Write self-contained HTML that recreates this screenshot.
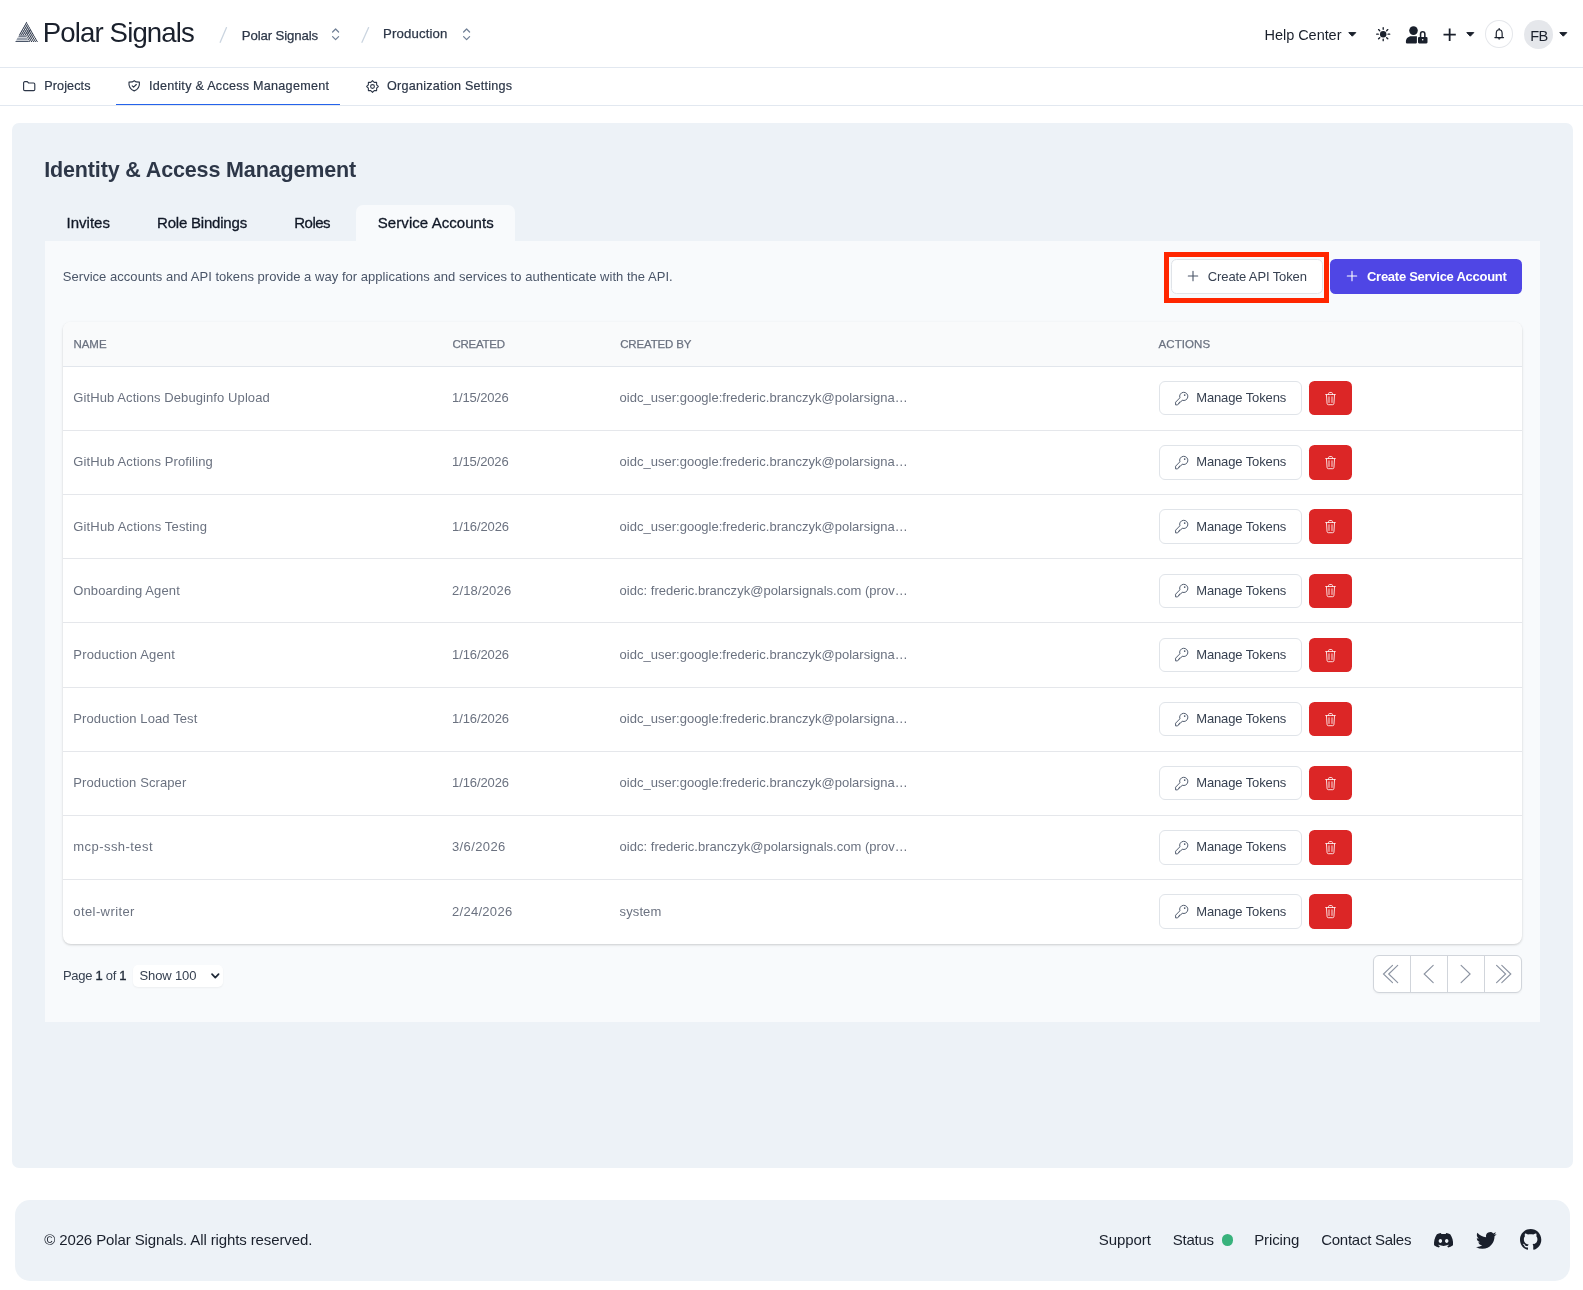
<!DOCTYPE html>
<html lang="en"><head><meta charset="utf-8"><title>Identity &amp; Access Management - Polar Signals</title>
<style>
*{box-sizing:border-box}
html,body{margin:0;padding:0;background:#fff}
body{width:1583px;height:1290px;position:relative;overflow:hidden;font-family:"Liberation Sans",sans-serif;}
#w{position:absolute;left:0;top:0;width:1583px;height:1290px;will-change:transform}
.t{position:absolute;white-space:pre;line-height:1;display:block}
.b{position:absolute}
svg{position:absolute;overflow:visible}
</style></head>
<body>
<div id="w">
<div class="b" style="left:0px;top:67px;width:1583px;height:1px;background:#e2e8f0"></div>
<div class="b" style="left:0px;top:105px;width:1583px;height:1px;background:#e2e8f0"></div>
<svg style="left:15px;top:22px" width="23.2" height="20.2" viewBox="15 22 23.2 20.2">
<defs><clipPath id="tri"><polygon points="26.3,21.6 38.3,42.1 14.9,42.1"/></clipPath>
<clipPath id="lf"><polygon points="26.3,21 31.6,30.0 25.9,35.3 18.0,35.3"/></clipPath>
<clipPath id="rf"><polygon points="31.4,29.2 38.6,42.1 29.6,42.1 25.9,35.3 28,31"/></clipPath></defs>
<g clip-path="url(#tri)">
<g clip-path="url(#lf)"><path d="M27.91,20 L14.55,44 M29.81,20 L16.45,44 M31.71,20 L18.35,44 M33.61,20 L20.25,44 M35.51,20 L22.15,44 M37.41,20 L24.05,44 M39.31,20 L25.95,44 M41.21,20 L27.85,44 " stroke="#2d3748" stroke-width="1.0"/><path d="M24.63,20 L38.67,44 M22.73,20 L36.77,44 M20.83,20 L34.87,44 M18.93,20 L32.97,44 M17.03,20 L31.07,44 M15.13,20 L29.17,44 M13.23,20 L27.27,44 M11.33,20 L25.37,44 " stroke="#4a5568" stroke-width="0.55"/></g>
<g clip-path="url(#rf)"><path d="M24.63,20 L38.67,44 M22.73,20 L36.77,44 M20.83,20 L34.87,44 M18.93,20 L32.97,44 M17.03,20 L31.07,44 M15.13,20 L29.17,44 M13.23,20 L27.27,44 M11.33,20 L25.37,44 " stroke="#2d3748" stroke-width="1.0"/><path d="M27.91,20 L14.55,44 M29.81,20 L16.45,44 M31.71,20 L18.35,44 M33.61,20 L20.25,44 M35.51,20 L22.15,44 M37.41,20 L24.05,44 M39.31,20 L25.95,44 M41.21,20 L27.85,44 " stroke="#4a5568" stroke-width="0.35"/></g>
<polygon points="18.9,35.6 25.6,35.6 26.2,36.7 18.3,36.7" fill="#4a5568"/>
<polygon points="17.6,37.5 26.7,37.5 28.3,40.5 16,40.5" fill="#9aa1ad"/>
<polygon points="15.7,41.0 28.6,41.0 29.2,42.1 15.1,42.1" fill="#4a5568"/>
</g></svg>
<span class="t" style="left:42.80px;top:17px;font-size:27.6px;line-height:31px;color:#1a202c;letter-spacing:-0.88px;">Polar Signals</span>
<svg style="left:0;top:0" width="1583" height="70"><line x1="220.2" y1="42.3" x2="226.5" y2="27.6" stroke="#cbd5e0" stroke-width="1.3" stroke-linecap="round"/></svg>
<span class="t" style="left:241.80px;top:28px;font-size:13.2px;line-height:15px;color:#2d3748;letter-spacing:-0.12px;-webkit-text-stroke:0.25px #2d3748;">Polar Signals</span>
<svg style="left:332.4px;top:28px" width="7.2" height="12.4" viewBox="0.4 0 7.2 12.4"><path d="M1.0,4.0 L4,1 L7.0,4.0 M1.0,8.6 L4,11.6 L7.0,8.6" fill="none" stroke="#718096" stroke-width="1.25" stroke-linecap="round" stroke-linejoin="round"/></svg>
<svg style="left:0;top:0" width="1583" height="70"><line x1="362" y1="42.3" x2="368.6" y2="27.6" stroke="#cbd5e0" stroke-width="1.3" stroke-linecap="round"/></svg>
<span class="t" style="left:383.00px;top:26px;font-size:13.2px;line-height:15px;color:#2d3748;letter-spacing:0.15px;-webkit-text-stroke:0.25px #2d3748;">Production</span>
<svg style="left:462.79999999999995px;top:28px" width="7.2" height="12.4" viewBox="0.4 0 7.2 12.4"><path d="M1.0,4.0 L4,1 L7.0,4.0 M1.0,8.6 L4,11.6 L7.0,8.6" fill="none" stroke="#718096" stroke-width="1.25" stroke-linecap="round" stroke-linejoin="round"/></svg>
<span class="t" style="left:1264.60px;top:27px;font-size:14.5px;line-height:16px;color:#1a202c;letter-spacing:-0.05px;">Help Center</span>
<svg style="left:1348.1px;top:32.2px" width="8.6" height="4.9" viewBox="0 0 8.6 4.9"><path d="M0.8,0.6 L7.8,0.6 L4.3,4.2 Z" fill="#1a202c" stroke="#1a202c" stroke-width="1.0" stroke-linejoin="round"/></svg>
<svg style="left:1375.8px;top:26.75px" width="14.4" height="14.4" viewBox="-7.2 -7.2 14.4 14.4"><circle r="3.25" fill="#1a202c"/><path d="M4.90,0.00 L6.50,0.00 M3.46,3.46 L4.60,4.60 M0.00,4.90 L0.00,6.50 M-3.46,3.46 L-4.60,4.60 M-4.90,0.00 L-6.50,0.00 M-3.46,-3.46 L-4.60,-4.60 M-0.00,-4.90 L-0.00,-6.50 M3.46,-3.46 L4.60,-4.60 " stroke="#1a202c" stroke-width="1.35" stroke-linecap="round"/></svg>
<svg style="left:1405px;top:26px" width="24" height="18" viewBox="1405 26 24 18">
<circle cx="1413.5" cy="30.6" r="4.3" fill="#1a202c"/>
<path d="M1405.9,43.4 V41.7 C1405.9,38.5 1408.2,36.2 1411.3,36.2 H1415.8 C1416.2,36.2 1416.6,36.25 1416.9,36.35 V42.6 Q1416.9,43.4 1416.1,43.4 H1406.7 Q1405.9,43.4 1405.9,42.6 Z" fill="#1a202c"/>
<path d="M1420.55,37.2 V33.9 a2.15,2.15 0 0 1 4.3,0 V37.2" fill="none" stroke="#1a202c" stroke-width="1.55"/>
<rect x="1418" y="36.9" width="9.5" height="6.5" rx="1.1" fill="#1a202c"/>
<circle cx="1422.7" cy="39.7" r="0.8" fill="#fff"/>
</svg>
<svg style="left:1443px;top:28px" width="14" height="14" viewBox="1443 28 14 14"><path d="M1449.65,28.4 V41.0 M1443.5,34.7 H1455.8" stroke="#1a202c" stroke-width="1.8" stroke-linecap="butt"/></svg>
<svg style="left:1465.8px;top:32.2px" width="8.6" height="4.9" viewBox="0 0 8.6 4.9"><path d="M0.8,0.6 L7.8,0.6 L4.3,4.2 Z" fill="#1a202c" stroke="#1a202c" stroke-width="1.0" stroke-linejoin="round"/></svg>
<div class="b" style="left:1485px;top:20.2px;width:27.9px;height:28.3px;border-radius:50%;background:#fff;border:1px solid #e5e7eb"></div>
<svg style="left:1494px;top:28px" width="10.4" height="12.4" viewBox="1494 28 10.4 12.4">
<path d="M1496.25,37.55 V33.6 C1496.25,31.3 1497.5,29.75 1499.2,29.75 C1500.9,29.75 1502.15,31.3 1502.15,33.6 V37.55" fill="none" stroke="#1a202c" stroke-width="1.2"/>
<path d="M1494.9,37.6 H1503.5" stroke="#1a202c" stroke-width="1.25" stroke-linecap="round"/>
<path d="M1499.2,28.6 V29.6" stroke="#1a202c" stroke-width="1.2" stroke-linecap="round"/>
<path d="M1498.1,38.6 C1498.3,39.6 1500.1,39.6 1500.3,38.6 Z" fill="#1a202c" stroke="#1a202c" stroke-width="0.5"/>
</svg>
<div class="b" style="left:1524.1px;top:20.1px;width:28.8px;height:28.5px;border-radius:50%;background:#e5e7eb"></div>
<span class="t" style="left:1530.20px;top:28px;font-size:14.6px;line-height:16px;color:#1a202c;letter-spacing:-0.5px;">FB</span>
<svg style="left:1558.9px;top:32.15px" width="8.6" height="4.9" viewBox="0 0 8.6 4.9"><path d="M0.8,0.6 L7.8,0.6 L4.3,4.2 Z" fill="#1a202c" stroke="#1a202c" stroke-width="1.0" stroke-linejoin="round"/></svg>
<svg style="left:22.9px;top:80.6px" width="12.4" height="10.4" viewBox="0 0 12.4 10.4">
<path d="M0.6,1.9 C0.6,1.2 1.1,0.7 1.8,0.7 L4.3,0.7 L5.6,2.0 L10.6,2.0 C11.3,2.0 11.8,2.5 11.8,3.2 L11.8,8.5 C11.8,9.2 11.3,9.7 10.6,9.7 L1.8,9.7 C1.1,9.7 0.6,9.2 0.6,8.5 Z" fill="none" stroke="#2d3748" stroke-width="1.15" stroke-linejoin="round"/></svg>
<span class="t" style="left:44.30px;top:79px;font-size:12.6px;line-height:14px;color:#2d3748;letter-spacing:0.1px;-webkit-text-stroke:0.2px #2d3748;">Projects</span>
<svg style="left:127.8px;top:80.2px" width="12.4" height="11.6" viewBox="0 0 12.4 11.6">
<path d="M6.2,0.7 L8.2,1.9 L11.4,2.1 C11.8,5.6 10.6,9.2 6.2,10.9 C1.8,9.2 0.6,5.6 1.0,2.1 L4.2,1.9 Z" fill="none" stroke="#2d3748" stroke-width="1.15" stroke-linejoin="round"/>
<path d="M4.2,5.8 L5.6,7.2 L8.3,4.5" fill="none" stroke="#2d3748" stroke-width="1.15" stroke-linecap="round" stroke-linejoin="round"/></svg>
<span class="t" style="left:149.00px;top:79px;font-size:12.6px;line-height:14px;color:#2d3748;letter-spacing:0.26px;-webkit-text-stroke:0.2px #2d3748;">Identity &amp; Access Management</span>
<div class="b" style="left:116.3px;top:103.6px;width:223.4px;height:1.6px;background:#2563eb"></div>
<svg style="left:365.5px;top:79.6px" width="13" height="13" viewBox="-6.5 -6.5 13 13"><polygon points="0.00,-5.80 1.72,-4.16 4.10,-4.10 4.16,-1.72 5.80,0.00 4.16,1.72 4.10,4.10 1.72,4.16 0.00,5.80 -1.72,4.16 -4.10,4.10 -4.16,1.72 -5.80,0.00 -4.16,-1.72 -4.10,-4.10 -1.72,-4.16" fill="none" stroke="#2d3748" stroke-width="1.1" stroke-linejoin="round"/><circle r="1.9" fill="none" stroke="#2d3748" stroke-width="1.1"/></svg>
<span class="t" style="left:387.10px;top:79px;font-size:12.6px;line-height:14px;color:#2d3748;letter-spacing:0.23px;-webkit-text-stroke:0.2px #2d3748;">Organization Settings</span>
<div class="b" style="left:12px;top:123px;width:1561px;height:1044.6px;background:#edf2f7;border-radius:7px"></div>
<span class="t" style="left:44.20px;top:158px;font-size:21.5px;line-height:24px;color:#2d3748;font-weight:700;letter-spacing:-0.14px;">Identity &amp; Access Management</span>
<span class="t" style="left:66.60px;top:214px;font-size:15px;line-height:17px;color:#111827;-webkit-text-stroke:0.3px #111827;">Invites</span>
<span class="t" style="left:157.00px;top:214px;font-size:15px;line-height:17px;color:#111827;letter-spacing:-0.2px;-webkit-text-stroke:0.3px #111827;">Role Bindings</span>
<span class="t" style="left:294.20px;top:214px;font-size:15px;line-height:17px;color:#111827;letter-spacing:-0.48px;-webkit-text-stroke:0.3px #111827;">Roles</span>
<div class="b" style="left:356px;top:205px;width:159px;height:40px;background:#f8fafc;border-radius:7px 7px 0 0"></div>
<span class="t" style="left:377.80px;top:214px;font-size:15px;line-height:17px;color:#111827;letter-spacing:0.06px;-webkit-text-stroke:0.3px #111827;">Service Accounts</span>
<div class="b" style="left:45px;top:241px;width:1495px;height:781px;background:#f8fafc"></div>
<span class="t" style="left:62.80px;top:269px;font-size:13px;line-height:15px;color:#4a5568;letter-spacing:0.035px;">Service accounts and API tokens provide a way for applications and services to authenticate with the API.</span>
<div class="b" style="left:1164px;top:252px;width:165px;height:50.6px;border:5px solid #ff2600"></div>
<div class="b" style="left:1171.4px;top:259.2px;width:151.2px;height:34.4px;background:#fff;border:1px solid #e0e4e9;border-radius:5.5px"></div>
<svg style="left:1188.2px;top:271.3px" width="10" height="10" viewBox="0 0 10 10"><path d="M5,0.3 V9.7 M0.3,5 H9.7" stroke="#4a5568" stroke-width="1.1" stroke-linecap="round"/></svg>
<span class="t" style="left:1207.80px;top:269px;font-size:13px;line-height:15px;color:#374151;letter-spacing:-0.12px;">Create API Token</span>
<div class="b" style="left:1330px;top:259px;width:192px;height:35px;background:#4f46e5;border-radius:5.5px"></div>
<svg style="left:1347.15px;top:271.15px" width="10" height="10" viewBox="0 0 10 10"><path d="M5,0.3 V9.7 M0.3,5 H9.7" stroke="#fff" stroke-width="1.1" stroke-linecap="round"/></svg>
<span class="t" style="left:1367.00px;top:269px;font-size:13px;line-height:15px;color:#fff;font-weight:700;letter-spacing:-0.27px;">Create Service Account</span>
<div class="b" style="left:62.6px;top:322.0px;width:1459.2px;height:621.75px;background:#fff;border-radius:8px;box-shadow:0 1px 3px rgba(0,0,0,0.12),0 1px 2px rgba(0,0,0,0.07)"></div>
<div class="b" style="left:62.6px;top:322.0px;width:1459.2px;height:44.4px;background:#f9fafb;border-radius:8px 8px 0 0"></div>
<div class="b" style="left:62.6px;top:366px;width:1459.2px;height:1px;background:#e2e6ec"></div>
<span class="t" style="left:73.50px;top:338px;font-size:11.5px;line-height:12px;color:#6b7280;letter-spacing:-0.053px;-webkit-text-stroke:0.25px #6b7280;">NAME</span>
<span class="t" style="left:452.40px;top:338px;font-size:11.5px;line-height:12px;color:#6b7280;letter-spacing:-0.239px;-webkit-text-stroke:0.25px #6b7280;">CREATED</span>
<span class="t" style="left:620.20px;top:338px;font-size:11.5px;line-height:12px;color:#6b7280;letter-spacing:-0.163px;-webkit-text-stroke:0.25px #6b7280;">CREATED BY</span>
<span class="t" style="left:1158.60px;top:338px;font-size:11.5px;line-height:12px;color:#6b7280;letter-spacing:0.075px;-webkit-text-stroke:0.25px #6b7280;">ACTIONS</span>
<span class="t" style="left:73.30px;top:390px;font-size:13px;line-height:15px;color:#6b7280;letter-spacing:0.092px;">GitHub Actions Debuginfo Upload</span>
<span class="t" style="left:452.00px;top:390px;font-size:13px;line-height:15px;color:#6b7280;letter-spacing:-0.149px;">1/15/2026</span>
<span class="t" style="left:619.60px;top:390px;font-size:13px;line-height:15px;color:#6b7280;letter-spacing:0.008px;">oidc_user:google:frederic.branczyk@polarsigna…</span>
<div class="b" style="left:1159.2px;top:381px;width:142.4px;height:34px;background:#fff;border:1px solid #e0e4e9;border-radius:6px"></div>
<svg style="left:1174.7px;top:391.87px" width="13.4" height="13.4" viewBox="0 0 13.4 13.4">
<path d="M4.9,5.8 L0.6,10.2 L0.6,12.9 L2.6,12.9 L3.5,12.0 L3.5,11.2 L4.5,11.2 L4.5,10.1 L5.6,10.1 L7.2,8.2 A4.1,4.1 0 1 0 4.9,5.8 Z" fill="none" stroke="#4a5568" stroke-width="0.95" stroke-linejoin="round"/>
<circle cx="9.7" cy="3.1" r="0.85" fill="#4a5568"/></svg>
<span class="t" style="left:1196.20px;top:390px;font-size:13px;line-height:15px;color:#374151;letter-spacing:-0.12px;">Manage Tokens</span>
<div class="b" style="left:1309px;top:381px;width:43.1px;height:34px;background:#dc2626;border-radius:5.5px"></div>
<svg style="left:1324.6px;top:391.97px" width="11" height="13.4" viewBox="0 0 11 13.4">
<path d="M0.7,2.55 H10.3 M3.6,2.4 V1.5 C3.6,0.9 4.0,0.5 4.6,0.5 H6.4 C7.0,0.5 7.4,0.9 7.4,1.5 V2.4 M1.45,2.8 L2.05,11.5 C2.1,12.2 2.6,12.7 3.3,12.7 H7.7 C8.4,12.7 8.9,12.2 8.95,11.5 L9.55,2.8 M4.0,4.8 V10.5 M7.0,4.8 V10.5" fill="none" stroke="#fff" stroke-opacity="0.95" stroke-width="0.88" stroke-linecap="round" stroke-linejoin="round"/></svg>
<div class="b" style="left:62.6px;top:430px;width:1459.2px;height:1px;background:#e5e7eb"></div>
<span class="t" style="left:73.30px;top:454px;font-size:13px;line-height:15px;color:#6b7280;letter-spacing:0.125px;">GitHub Actions Profiling</span>
<span class="t" style="left:452.00px;top:454px;font-size:13px;line-height:15px;color:#6b7280;letter-spacing:-0.149px;">1/15/2026</span>
<span class="t" style="left:619.60px;top:454px;font-size:13px;line-height:15px;color:#6b7280;letter-spacing:0.008px;">oidc_user:google:frederic.branczyk@polarsigna…</span>
<div class="b" style="left:1159.2px;top:445px;width:142.4px;height:35px;background:#fff;border:1px solid #e0e4e9;border-radius:6px"></div>
<svg style="left:1174.7px;top:456.02px" width="13.4" height="13.4" viewBox="0 0 13.4 13.4">
<path d="M4.9,5.8 L0.6,10.2 L0.6,12.9 L2.6,12.9 L3.5,12.0 L3.5,11.2 L4.5,11.2 L4.5,10.1 L5.6,10.1 L7.2,8.2 A4.1,4.1 0 1 0 4.9,5.8 Z" fill="none" stroke="#4a5568" stroke-width="0.95" stroke-linejoin="round"/>
<circle cx="9.7" cy="3.1" r="0.85" fill="#4a5568"/></svg>
<span class="t" style="left:1196.20px;top:454px;font-size:13px;line-height:15px;color:#374151;letter-spacing:-0.12px;">Manage Tokens</span>
<div class="b" style="left:1309px;top:445px;width:43.1px;height:35px;background:#dc2626;border-radius:5.5px"></div>
<svg style="left:1324.6px;top:456.12px" width="11" height="13.4" viewBox="0 0 11 13.4">
<path d="M0.7,2.55 H10.3 M3.6,2.4 V1.5 C3.6,0.9 4.0,0.5 4.6,0.5 H6.4 C7.0,0.5 7.4,0.9 7.4,1.5 V2.4 M1.45,2.8 L2.05,11.5 C2.1,12.2 2.6,12.7 3.3,12.7 H7.7 C8.4,12.7 8.9,12.2 8.95,11.5 L9.55,2.8 M4.0,4.8 V10.5 M7.0,4.8 V10.5" fill="none" stroke="#fff" stroke-opacity="0.95" stroke-width="0.88" stroke-linecap="round" stroke-linejoin="round"/></svg>
<div class="b" style="left:62.6px;top:494px;width:1459.2px;height:1px;background:#e5e7eb"></div>
<span class="t" style="left:73.30px;top:519px;font-size:13px;line-height:15px;color:#6b7280;letter-spacing:0.147px;">GitHub Actions Testing</span>
<span class="t" style="left:452.00px;top:519px;font-size:13px;line-height:15px;color:#6b7280;letter-spacing:-0.099px;">1/16/2026</span>
<span class="t" style="left:619.60px;top:519px;font-size:13px;line-height:15px;color:#6b7280;letter-spacing:0.008px;">oidc_user:google:frederic.branczyk@polarsigna…</span>
<div class="b" style="left:1159.2px;top:509px;width:142.4px;height:35px;background:#fff;border:1px solid #e0e4e9;border-radius:6px"></div>
<svg style="left:1174.7px;top:520.17px" width="13.4" height="13.4" viewBox="0 0 13.4 13.4">
<path d="M4.9,5.8 L0.6,10.2 L0.6,12.9 L2.6,12.9 L3.5,12.0 L3.5,11.2 L4.5,11.2 L4.5,10.1 L5.6,10.1 L7.2,8.2 A4.1,4.1 0 1 0 4.9,5.8 Z" fill="none" stroke="#4a5568" stroke-width="0.95" stroke-linejoin="round"/>
<circle cx="9.7" cy="3.1" r="0.85" fill="#4a5568"/></svg>
<span class="t" style="left:1196.20px;top:519px;font-size:13px;line-height:15px;color:#374151;letter-spacing:-0.12px;">Manage Tokens</span>
<div class="b" style="left:1309px;top:509px;width:43.1px;height:35px;background:#dc2626;border-radius:5.5px"></div>
<svg style="left:1324.6px;top:520.27px" width="11" height="13.4" viewBox="0 0 11 13.4">
<path d="M0.7,2.55 H10.3 M3.6,2.4 V1.5 C3.6,0.9 4.0,0.5 4.6,0.5 H6.4 C7.0,0.5 7.4,0.9 7.4,1.5 V2.4 M1.45,2.8 L2.05,11.5 C2.1,12.2 2.6,12.7 3.3,12.7 H7.7 C8.4,12.7 8.9,12.2 8.95,11.5 L9.55,2.8 M4.0,4.8 V10.5 M7.0,4.8 V10.5" fill="none" stroke="#fff" stroke-opacity="0.95" stroke-width="0.88" stroke-linecap="round" stroke-linejoin="round"/></svg>
<div class="b" style="left:62.6px;top:558px;width:1459.2px;height:1px;background:#e5e7eb"></div>
<span class="t" style="left:73.30px;top:583px;font-size:13px;line-height:15px;color:#6b7280;letter-spacing:0.109px;">Onboarding Agent</span>
<span class="t" style="left:452.00px;top:583px;font-size:13px;line-height:15px;color:#6b7280;letter-spacing:0.163px;">2/18/2026</span>
<span class="t" style="left:619.60px;top:583px;font-size:13px;line-height:15px;color:#6b7280;letter-spacing:0.024px;">oidc: frederic.branczyk@polarsignals.com (prov…</span>
<div class="b" style="left:1159.2px;top:574px;width:142.4px;height:34px;background:#fff;border:1px solid #e0e4e9;border-radius:6px"></div>
<svg style="left:1174.7px;top:584.32px" width="13.4" height="13.4" viewBox="0 0 13.4 13.4">
<path d="M4.9,5.8 L0.6,10.2 L0.6,12.9 L2.6,12.9 L3.5,12.0 L3.5,11.2 L4.5,11.2 L4.5,10.1 L5.6,10.1 L7.2,8.2 A4.1,4.1 0 1 0 4.9,5.8 Z" fill="none" stroke="#4a5568" stroke-width="0.95" stroke-linejoin="round"/>
<circle cx="9.7" cy="3.1" r="0.85" fill="#4a5568"/></svg>
<span class="t" style="left:1196.20px;top:583px;font-size:13px;line-height:15px;color:#374151;letter-spacing:-0.12px;">Manage Tokens</span>
<div class="b" style="left:1309px;top:574px;width:43.1px;height:34px;background:#dc2626;border-radius:5.5px"></div>
<svg style="left:1324.6px;top:584.42px" width="11" height="13.4" viewBox="0 0 11 13.4">
<path d="M0.7,2.55 H10.3 M3.6,2.4 V1.5 C3.6,0.9 4.0,0.5 4.6,0.5 H6.4 C7.0,0.5 7.4,0.9 7.4,1.5 V2.4 M1.45,2.8 L2.05,11.5 C2.1,12.2 2.6,12.7 3.3,12.7 H7.7 C8.4,12.7 8.9,12.2 8.95,11.5 L9.55,2.8 M4.0,4.8 V10.5 M7.0,4.8 V10.5" fill="none" stroke="#fff" stroke-opacity="0.95" stroke-width="0.88" stroke-linecap="round" stroke-linejoin="round"/></svg>
<div class="b" style="left:62.6px;top:622px;width:1459.2px;height:1px;background:#e5e7eb"></div>
<span class="t" style="left:73.30px;top:647px;font-size:13px;line-height:15px;color:#6b7280;letter-spacing:0.168px;">Production Agent</span>
<span class="t" style="left:452.00px;top:647px;font-size:13px;line-height:15px;color:#6b7280;letter-spacing:-0.099px;">1/16/2026</span>
<span class="t" style="left:619.60px;top:647px;font-size:13px;line-height:15px;color:#6b7280;letter-spacing:0.008px;">oidc_user:google:frederic.branczyk@polarsigna…</span>
<div class="b" style="left:1159.2px;top:638px;width:142.4px;height:34px;background:#fff;border:1px solid #e0e4e9;border-radius:6px"></div>
<svg style="left:1174.7px;top:648.47px" width="13.4" height="13.4" viewBox="0 0 13.4 13.4">
<path d="M4.9,5.8 L0.6,10.2 L0.6,12.9 L2.6,12.9 L3.5,12.0 L3.5,11.2 L4.5,11.2 L4.5,10.1 L5.6,10.1 L7.2,8.2 A4.1,4.1 0 1 0 4.9,5.8 Z" fill="none" stroke="#4a5568" stroke-width="0.95" stroke-linejoin="round"/>
<circle cx="9.7" cy="3.1" r="0.85" fill="#4a5568"/></svg>
<span class="t" style="left:1196.20px;top:647px;font-size:13px;line-height:15px;color:#374151;letter-spacing:-0.12px;">Manage Tokens</span>
<div class="b" style="left:1309px;top:638px;width:43.1px;height:34px;background:#dc2626;border-radius:5.5px"></div>
<svg style="left:1324.6px;top:648.57px" width="11" height="13.4" viewBox="0 0 11 13.4">
<path d="M0.7,2.55 H10.3 M3.6,2.4 V1.5 C3.6,0.9 4.0,0.5 4.6,0.5 H6.4 C7.0,0.5 7.4,0.9 7.4,1.5 V2.4 M1.45,2.8 L2.05,11.5 C2.1,12.2 2.6,12.7 3.3,12.7 H7.7 C8.4,12.7 8.9,12.2 8.95,11.5 L9.55,2.8 M4.0,4.8 V10.5 M7.0,4.8 V10.5" fill="none" stroke="#fff" stroke-opacity="0.95" stroke-width="0.88" stroke-linecap="round" stroke-linejoin="round"/></svg>
<div class="b" style="left:62.6px;top:687px;width:1459.2px;height:1px;background:#e5e7eb"></div>
<span class="t" style="left:73.30px;top:711px;font-size:13px;line-height:15px;color:#6b7280;letter-spacing:0.113px;">Production Load Test</span>
<span class="t" style="left:452.00px;top:711px;font-size:13px;line-height:15px;color:#6b7280;letter-spacing:-0.099px;">1/16/2026</span>
<span class="t" style="left:619.60px;top:711px;font-size:13px;line-height:15px;color:#6b7280;letter-spacing:0.008px;">oidc_user:google:frederic.branczyk@polarsigna…</span>
<div class="b" style="left:1159.2px;top:702px;width:142.4px;height:34px;background:#fff;border:1px solid #e0e4e9;border-radius:6px"></div>
<svg style="left:1174.7px;top:712.62px" width="13.4" height="13.4" viewBox="0 0 13.4 13.4">
<path d="M4.9,5.8 L0.6,10.2 L0.6,12.9 L2.6,12.9 L3.5,12.0 L3.5,11.2 L4.5,11.2 L4.5,10.1 L5.6,10.1 L7.2,8.2 A4.1,4.1 0 1 0 4.9,5.8 Z" fill="none" stroke="#4a5568" stroke-width="0.95" stroke-linejoin="round"/>
<circle cx="9.7" cy="3.1" r="0.85" fill="#4a5568"/></svg>
<span class="t" style="left:1196.20px;top:711px;font-size:13px;line-height:15px;color:#374151;letter-spacing:-0.12px;">Manage Tokens</span>
<div class="b" style="left:1309px;top:702px;width:43.1px;height:34px;background:#dc2626;border-radius:5.5px"></div>
<svg style="left:1324.6px;top:712.72px" width="11" height="13.4" viewBox="0 0 11 13.4">
<path d="M0.7,2.55 H10.3 M3.6,2.4 V1.5 C3.6,0.9 4.0,0.5 4.6,0.5 H6.4 C7.0,0.5 7.4,0.9 7.4,1.5 V2.4 M1.45,2.8 L2.05,11.5 C2.1,12.2 2.6,12.7 3.3,12.7 H7.7 C8.4,12.7 8.9,12.2 8.95,11.5 L9.55,2.8 M4.0,4.8 V10.5 M7.0,4.8 V10.5" fill="none" stroke="#fff" stroke-opacity="0.95" stroke-width="0.88" stroke-linecap="round" stroke-linejoin="round"/></svg>
<div class="b" style="left:62.6px;top:751px;width:1459.2px;height:1px;background:#e5e7eb"></div>
<span class="t" style="left:73.30px;top:775px;font-size:13px;line-height:15px;color:#6b7280;letter-spacing:0.098px;">Production Scraper</span>
<span class="t" style="left:452.00px;top:775px;font-size:13px;line-height:15px;color:#6b7280;letter-spacing:-0.099px;">1/16/2026</span>
<span class="t" style="left:619.60px;top:775px;font-size:13px;line-height:15px;color:#6b7280;letter-spacing:0.008px;">oidc_user:google:frederic.branczyk@polarsigna…</span>
<div class="b" style="left:1159.2px;top:766px;width:142.4px;height:34px;background:#fff;border:1px solid #e0e4e9;border-radius:6px"></div>
<svg style="left:1174.7px;top:776.77px" width="13.4" height="13.4" viewBox="0 0 13.4 13.4">
<path d="M4.9,5.8 L0.6,10.2 L0.6,12.9 L2.6,12.9 L3.5,12.0 L3.5,11.2 L4.5,11.2 L4.5,10.1 L5.6,10.1 L7.2,8.2 A4.1,4.1 0 1 0 4.9,5.8 Z" fill="none" stroke="#4a5568" stroke-width="0.95" stroke-linejoin="round"/>
<circle cx="9.7" cy="3.1" r="0.85" fill="#4a5568"/></svg>
<span class="t" style="left:1196.20px;top:775px;font-size:13px;line-height:15px;color:#374151;letter-spacing:-0.12px;">Manage Tokens</span>
<div class="b" style="left:1309px;top:766px;width:43.1px;height:34px;background:#dc2626;border-radius:5.5px"></div>
<svg style="left:1324.6px;top:776.87px" width="11" height="13.4" viewBox="0 0 11 13.4">
<path d="M0.7,2.55 H10.3 M3.6,2.4 V1.5 C3.6,0.9 4.0,0.5 4.6,0.5 H6.4 C7.0,0.5 7.4,0.9 7.4,1.5 V2.4 M1.45,2.8 L2.05,11.5 C2.1,12.2 2.6,12.7 3.3,12.7 H7.7 C8.4,12.7 8.9,12.2 8.95,11.5 L9.55,2.8 M4.0,4.8 V10.5 M7.0,4.8 V10.5" fill="none" stroke="#fff" stroke-opacity="0.95" stroke-width="0.88" stroke-linecap="round" stroke-linejoin="round"/></svg>
<div class="b" style="left:62.6px;top:815px;width:1459.2px;height:1px;background:#e5e7eb"></div>
<span class="t" style="left:73.30px;top:839px;font-size:13px;line-height:15px;color:#6b7280;letter-spacing:0.44px;">mcp-ssh-test</span>
<span class="t" style="left:452.00px;top:839px;font-size:13px;line-height:15px;color:#6b7280;letter-spacing:0.377px;">3/6/2026</span>
<span class="t" style="left:619.60px;top:839px;font-size:13px;line-height:15px;color:#6b7280;letter-spacing:0.024px;">oidc: frederic.branczyk@polarsignals.com (prov…</span>
<div class="b" style="left:1159.2px;top:830px;width:142.4px;height:35px;background:#fff;border:1px solid #e0e4e9;border-radius:6px"></div>
<svg style="left:1174.7px;top:840.92px" width="13.4" height="13.4" viewBox="0 0 13.4 13.4">
<path d="M4.9,5.8 L0.6,10.2 L0.6,12.9 L2.6,12.9 L3.5,12.0 L3.5,11.2 L4.5,11.2 L4.5,10.1 L5.6,10.1 L7.2,8.2 A4.1,4.1 0 1 0 4.9,5.8 Z" fill="none" stroke="#4a5568" stroke-width="0.95" stroke-linejoin="round"/>
<circle cx="9.7" cy="3.1" r="0.85" fill="#4a5568"/></svg>
<span class="t" style="left:1196.20px;top:839px;font-size:13px;line-height:15px;color:#374151;letter-spacing:-0.12px;">Manage Tokens</span>
<div class="b" style="left:1309px;top:830px;width:43.1px;height:35px;background:#dc2626;border-radius:5.5px"></div>
<svg style="left:1324.6px;top:841.02px" width="11" height="13.4" viewBox="0 0 11 13.4">
<path d="M0.7,2.55 H10.3 M3.6,2.4 V1.5 C3.6,0.9 4.0,0.5 4.6,0.5 H6.4 C7.0,0.5 7.4,0.9 7.4,1.5 V2.4 M1.45,2.8 L2.05,11.5 C2.1,12.2 2.6,12.7 3.3,12.7 H7.7 C8.4,12.7 8.9,12.2 8.95,11.5 L9.55,2.8 M4.0,4.8 V10.5 M7.0,4.8 V10.5" fill="none" stroke="#fff" stroke-opacity="0.95" stroke-width="0.88" stroke-linecap="round" stroke-linejoin="round"/></svg>
<div class="b" style="left:62.6px;top:879px;width:1459.2px;height:1px;background:#e5e7eb"></div>
<span class="t" style="left:73.30px;top:904px;font-size:13px;line-height:15px;color:#6b7280;letter-spacing:0.407px;">otel-writer</span>
<span class="t" style="left:452.00px;top:904px;font-size:13px;line-height:15px;color:#6b7280;letter-spacing:0.288px;">2/24/2026</span>
<span class="t" style="left:619.60px;top:904px;font-size:13px;line-height:15px;color:#6b7280;letter-spacing:0.096px;">system</span>
<div class="b" style="left:1159.2px;top:894px;width:142.4px;height:35px;background:#fff;border:1px solid #e0e4e9;border-radius:6px"></div>
<svg style="left:1174.7px;top:905.07px" width="13.4" height="13.4" viewBox="0 0 13.4 13.4">
<path d="M4.9,5.8 L0.6,10.2 L0.6,12.9 L2.6,12.9 L3.5,12.0 L3.5,11.2 L4.5,11.2 L4.5,10.1 L5.6,10.1 L7.2,8.2 A4.1,4.1 0 1 0 4.9,5.8 Z" fill="none" stroke="#4a5568" stroke-width="0.95" stroke-linejoin="round"/>
<circle cx="9.7" cy="3.1" r="0.85" fill="#4a5568"/></svg>
<span class="t" style="left:1196.20px;top:904px;font-size:13px;line-height:15px;color:#374151;letter-spacing:-0.12px;">Manage Tokens</span>
<div class="b" style="left:1309px;top:894px;width:43.1px;height:35px;background:#dc2626;border-radius:5.5px"></div>
<svg style="left:1324.6px;top:905.17px" width="11" height="13.4" viewBox="0 0 11 13.4">
<path d="M0.7,2.55 H10.3 M3.6,2.4 V1.5 C3.6,0.9 4.0,0.5 4.6,0.5 H6.4 C7.0,0.5 7.4,0.9 7.4,1.5 V2.4 M1.45,2.8 L2.05,11.5 C2.1,12.2 2.6,12.7 3.3,12.7 H7.7 C8.4,12.7 8.9,12.2 8.95,11.5 L9.55,2.8 M4.0,4.8 V10.5 M7.0,4.8 V10.5" fill="none" stroke="#fff" stroke-opacity="0.95" stroke-width="0.88" stroke-linecap="round" stroke-linejoin="round"/></svg>
<span class="t" style="left:63.00px;top:968px;font-size:13px;line-height:15px;color:#374151;letter-spacing:-0.3px;">Page <span style="color:#1f2937;-webkit-text-stroke:0.35px #1f2937">1</span> of <span style="color:#1f2937;-webkit-text-stroke:0.35px #1f2937">1</span></span>
<div class="b" style="left:133px;top:965px;width:89.8px;height:22px;background:#fff;border-radius:5px;box-shadow:0 1px 2px rgba(0,0,0,0.05)"></div>
<span class="t" style="left:139.60px;top:968px;font-size:13px;line-height:15px;color:#374151;letter-spacing:-0.15px;">Show 100</span>
<svg style="left:210.6px;top:973.4px" width="8.6" height="6" viewBox="0 0 8.6 6"><path d="M1,1.1 L4.3,4.6 L7.6,1.1" fill="none" stroke="#1f2937" stroke-width="1.7" stroke-linecap="round" stroke-linejoin="round"/></svg>
<div class="b" style="left:1373.2px;top:955px;width:148.8px;height:37.6px;background:#fff;border:1px solid #d1d5db;border-radius:6px;box-shadow:0 1px 2px rgba(0,0,0,0.05)"></div>
<div class="b" style="left:1409.8px;top:955px;width:1px;height:37.6px;background:#d1d5db"></div>
<div class="b" style="left:1446.8px;top:955px;width:1px;height:37.6px;background:#d1d5db"></div>
<div class="b" style="left:1483.9px;top:955px;width:1px;height:37.6px;background:#d1d5db"></div>
<svg style="left:0;top:0" width="1583" height="1290"><path d="M1392.50,965.40 L1383.50,974.00 L1392.50,982.60 M1397.70,965.40 L1388.70,974.00 L1397.70,982.60 " fill="none" stroke="#8b93a1" stroke-width="1.15" stroke-linecap="round" stroke-linejoin="miter"/></svg>
<svg style="left:0;top:0" width="1583" height="1290"><path d="M1433.20,965.40 L1424.20,974.00 L1433.20,982.60 " fill="none" stroke="#8b93a1" stroke-width="1.15" stroke-linecap="round" stroke-linejoin="miter"/></svg>
<svg style="left:0;top:0" width="1583" height="1290"><path d="M1461.10,965.40 L1470.10,974.00 L1461.10,982.60 " fill="none" stroke="#8b93a1" stroke-width="1.15" stroke-linecap="round" stroke-linejoin="miter"/></svg>
<svg style="left:0;top:0" width="1583" height="1290"><path d="M1496.60,965.40 L1505.60,974.00 L1496.60,982.60 M1501.80,965.40 L1510.80,974.00 L1501.80,982.60 " fill="none" stroke="#8b93a1" stroke-width="1.15" stroke-linecap="round" stroke-linejoin="miter"/></svg>
<div class="b" style="left:15px;top:1199.8px;width:1555px;height:81px;background:#edf2f7;border-radius:15px"></div>
<span class="t" style="left:44.20px;top:1231px;font-size:15px;line-height:17px;color:#1a202c;letter-spacing:-0.115px;">© 2026 Polar Signals. All rights reserved.</span>
<span class="t" style="left:1098.80px;top:1231px;font-size:15px;line-height:17px;color:#1a202c;letter-spacing:-0.08px;">Support</span>
<span class="t" style="left:1172.80px;top:1231px;font-size:15px;line-height:17px;color:#1a202c;letter-spacing:-0.25px;">Status</span>
<div class="b" style="left:1222px;top:1234.4px;width:11.2px;height:11.2px;background:#38b27c;border-radius:50%"></div>
<span class="t" style="left:1254.20px;top:1231px;font-size:15px;line-height:17px;color:#1a202c;letter-spacing:-0.12px;">Pricing</span>
<span class="t" style="left:1321.20px;top:1231px;font-size:15px;line-height:17px;color:#1a202c;letter-spacing:-0.26px;">Contact Sales</span>
<svg style="left:1434.3px;top:1233.0px" width="19.1" height="14.64" viewBox="0 2.8 24 18.4"><path d="M20.317 4.3698a19.7913 19.7913 0 00-4.8851-1.5152.0741.0741 0 00-.0785.0371c-.211.3753-.4447.8648-.6083 1.2495-1.8447-.2762-3.68-.2762-5.4868 0-.1636-.3933-.4058-.8742-.6177-1.2495a.077.077 0 00-.0785-.037 19.7363 19.7363 0 00-4.8852 1.515.0699.0699 0 00-.0321.0277C.5334 9.0458-.319 13.5799.0992 18.0578a.0824.0824 0 00.0312.0561c2.0528 1.5076 4.0413 2.4228 5.9929 3.0294a.0777.0777 0 00.0842-.0276c.4616-.6304.8731-1.2952 1.226-1.9942a.076.076 0 00-.0416-.1057c-.6528-.2476-1.2743-.5495-1.8722-.8923a.077.077 0 01-.0076-.1277c.1258-.0943.2517-.1923.3718-.2914a.0743.0743 0 01.0776-.0105c3.9278 1.7933 8.18 1.7933 12.0614 0a.0739.0739 0 01.0785.0095c.1202.099.246.1981.3728.2924a.077.077 0 01-.0066.1276 12.2986 12.2986 0 01-1.873.8914.0766.0766 0 00-.0407.1067c.3604.698.7719 1.3628 1.225 1.9932a.076.076 0 00.0842.0286c1.961-.6067 3.9495-1.5219 6.0023-3.0294a.077.077 0 00.0313-.0552c.5004-5.177-.8382-9.6739-3.5485-13.6604a.061.061 0 00-.0312-.0286zM8.02 15.3312c-1.1825 0-2.1569-1.0857-2.1569-2.419 0-1.3332.9555-2.4189 2.157-2.4189 1.2108 0 2.1757 1.0952 2.1568 2.419 0 1.3332-.9555 2.4189-2.1569 2.4189zm7.9748 0c-1.1825 0-2.1569-1.0857-2.1569-2.419 0-1.3332.9554-2.4189 2.1569-2.4189 1.2108 0 2.1757 1.0952 2.1568 2.419 0 1.3332-.946 2.4189-2.1568 2.4189Z" fill="#1a202c"/></svg>
<svg style="left:1476.3px;top:1231.6px" width="20.6" height="16.82" viewBox="0 2.2 24 19.6"><path d="M23.953 4.57a10 10 0 01-2.825.775 4.958 4.958 0 002.163-2.723c-.951.555-2.005.959-3.127 1.184a4.92 4.92 0 00-8.384 4.482C7.69 8.095 4.067 6.13 1.64 3.162a4.822 4.822 0 00-.666 2.475c0 1.71.87 3.213 2.188 4.096a4.904 4.904 0 01-2.228-.616v.06a4.923 4.923 0 003.946 4.827 4.996 4.996 0 01-2.212.085 4.936 4.936 0 004.604 3.417 9.867 9.867 0 01-6.102 2.105c-.39 0-.779-.023-1.17-.067a13.995 13.995 0 007.557 2.209c9.053 0 13.998-7.496 13.998-13.985 0-.21 0-.42-.015-.63A9.935 9.935 0 0024 4.59z" fill="#1a202c"/></svg>
<svg style="left:1520.1px;top:1229.4px" width="21.3" height="20.77" viewBox="0 0.3 24 23.4"><path d="M12 .297c-6.63 0-12 5.373-12 12 0 5.303 3.438 9.8 8.205 11.385.6.113.82-.258.82-.577 0-.285-.01-1.04-.015-2.04-3.338.724-4.042-1.61-4.042-1.61C4.422 18.07 3.633 17.7 3.633 17.7c-1.087-.744.084-.729.084-.729 1.205.084 1.838 1.236 1.838 1.236 1.07 1.835 2.809 1.305 3.495.998.108-.776.417-1.305.76-1.605-2.665-.3-5.466-1.332-5.466-5.93 0-1.31.465-2.38 1.235-3.22-.135-.303-.54-1.523.105-3.176 0 0 1.005-.322 3.3 1.23.96-.267 1.98-.399 3-.405 1.02.006 2.04.138 3 .405 2.28-1.552 3.285-1.23 3.285-1.23.645 1.653.24 2.873.12 3.176.765.84 1.23 1.91 1.23 3.22 0 4.61-2.805 5.625-5.475 5.92.42.36.81 1.096.81 2.22 0 1.606-.015 2.896-.015 3.286 0 .315.21.69.825.57C20.565 22.092 24 17.592 24 12.297c0-6.627-5.373-12-12-12" fill="#1a202c"/></svg>
</div>
</body></html>
